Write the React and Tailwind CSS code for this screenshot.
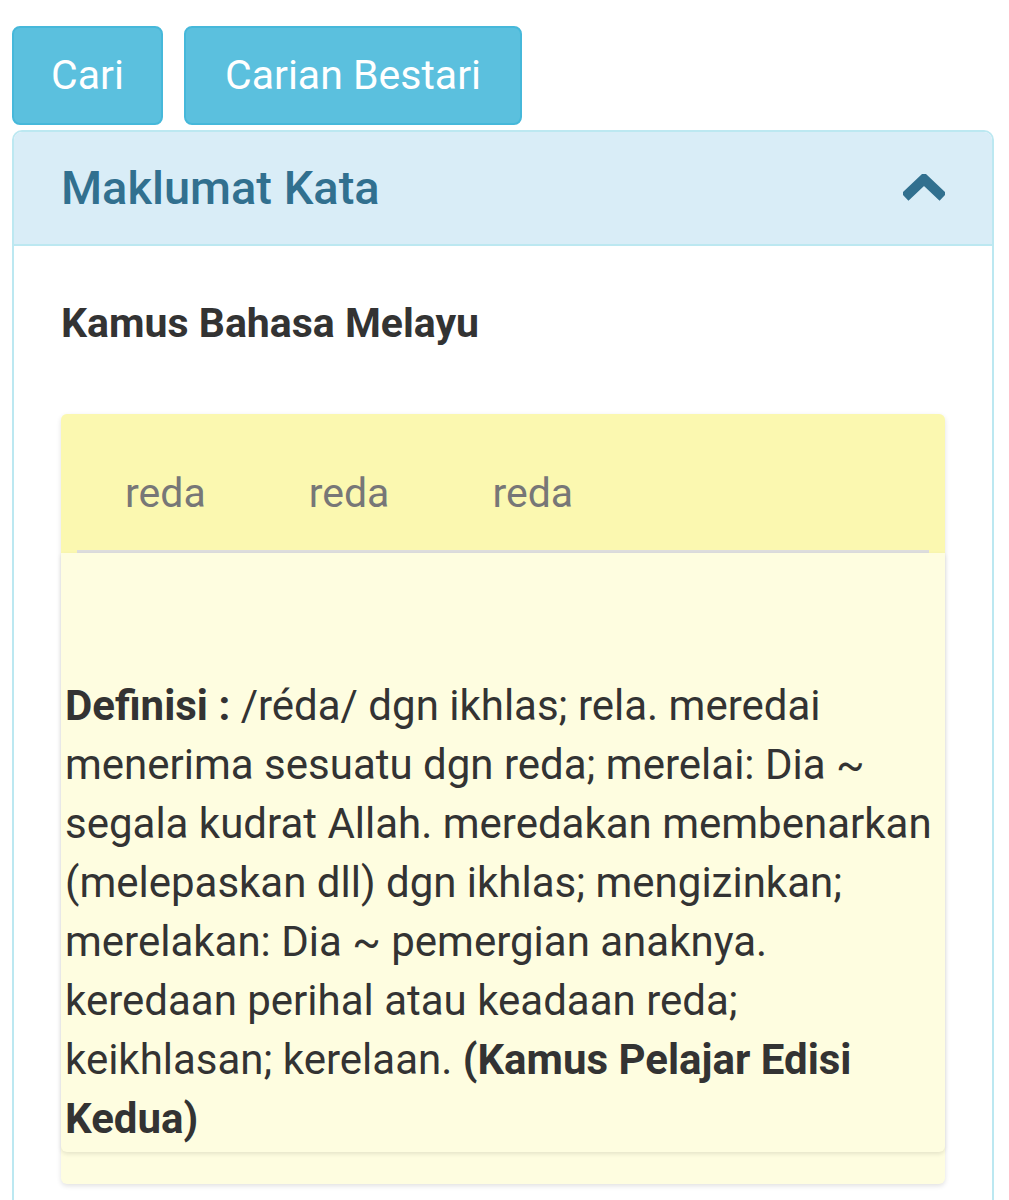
export default function App() {
  return (
    <div className="w-[1009px] h-[1200px] overflow-hidden bg-white font-['Roboto',sans-serif] text-[#333]">
      {/* Search buttons */}
      <div className="flex gap-[21px] pl-[12px] pt-[26px]">
        <button className="h-[99px] w-[151px] rounded-[8px] border-2 border-[#46b8da] bg-[#5bc0de] text-[41px] text-white">
          Cari
        </button>
        <button className="h-[99px] w-[338px] rounded-[8px] border-2 border-[#46b8da] bg-[#5bc0de] text-[41px] text-white">
          Carian Bestari
        </button>
      </div>

      {/* Panel */}
      <div className="ml-[12px] mt-[5px] w-[982px] rounded-t-[10px] border-2 border-[#bce8f1]">
        <div className="flex h-[114px] items-center justify-between rounded-t-[8px] border-b-2 border-[#bce8f1] bg-[#d9edf7] pl-[47px] pr-[47px]">
          <h3 className="text-[47px] font-medium text-[#31708f]">Maklumat Kata</h3>
          <svg width="42" height="28" viewBox="0 0 42 28">
            <polyline points="2,23 21,5 40,23" fill="none" stroke="#31708f" strokeWidth="10" />
          </svg>
        </div>

        <div className="px-[47px] pb-[40px] pt-[52px]">
          <h4 className="text-[41px] font-bold leading-[50px]">Kamus Bahasa Melayu</h4>

          <div className="mt-[66px] rounded-[6px] bg-[#fefde0] pb-[32px] shadow-[0_2px_5px_rgba(0,0,0,0.12)]">
            <div className="rounded-t-[6px] bg-[#fbf8b0] px-[16px] pt-[55px]">
              <ul className="flex gap-[7px] border-b-[3px] border-[#dddddd] pb-[33px]">
                <li className="px-[48px] text-[41px] leading-[48px] text-[#777]">reda</li>
                <li className="px-[48px] text-[41px] leading-[48px] text-[#777]">reda</li>
                <li className="px-[48px] text-[41px] leading-[48px] text-[#777]">reda</li>
              </ul>
            </div>
            <div className="rounded-b-[6px] bg-[#fefde0] px-[4px] pb-[4px] pt-[123px] shadow-[0_2px_4px_rgba(0,0,0,0.1)]">
              <p className="text-[42px] leading-[59px]">
                <b>Definisi :</b> /réda/ dgn ikhlas; rela. meredai menerima sesuatu dgn reda; merelai: Dia ~ segala kudrat Allah. meredakan membenarkan (melepaskan dll) dgn ikhlas; mengizinkan; merelakan: Dia ~ pemergian anaknya. keredaan perihal atau keadaan reda; keikhlasan; kerelaan. <b>(Kamus Pelajar Edisi Kedua)</b>
              </p>
            </div>
          </div>
        </div>
      </div>
    </div>
  );
}
